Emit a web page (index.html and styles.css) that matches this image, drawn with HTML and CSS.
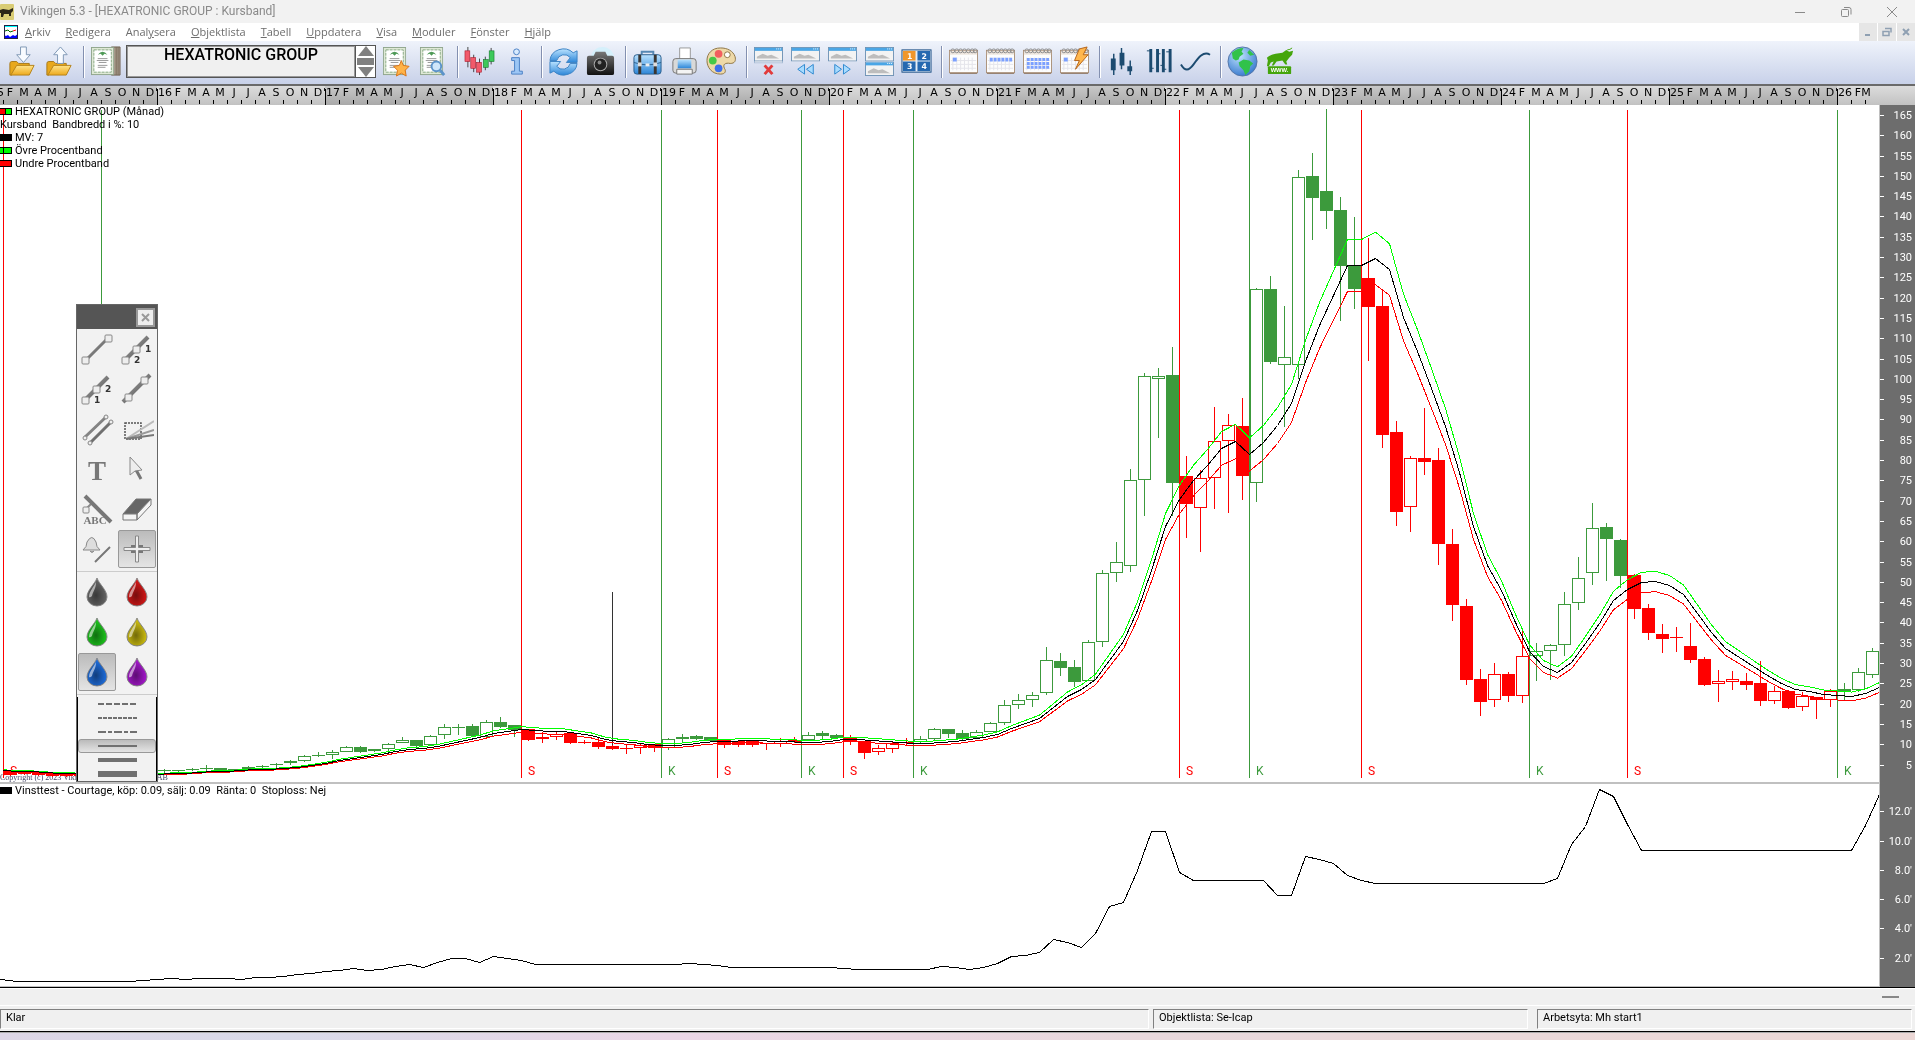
FILE: index.html
```
<!DOCTYPE html>
<html lang="sv">
<head>
  <meta charset="UTF-8">
  <meta name="viewport" content="width=device-width, initial-scale=1.0">
  <title>Vikingen 5.3 - [HEXATRONIC GROUP : Kursband]</title>
  <link rel="stylesheet" href="styles.css">
</head>
<body>
  <!-- shared gradients and symbols -->
  <svg class="defs" width="0" height="0" aria-hidden="true">
    <defs>
      <linearGradient id="gold" x1="0" y1="0" x2="0" y2="1"><stop offset="0" stop-color="#ffe48a"/><stop offset="1" stop-color="#eda91c"/></linearGradient>
      <linearGradient id="blue" x1="0" y1="0" x2="0" y2="1"><stop offset="0" stop-color="#b9e2ff"/><stop offset="1" stop-color="#2c86d8"/></linearGradient>
      <linearGradient id="dark" x1="0" y1="0" x2="0" y2="1"><stop offset="0" stop-color="#777"/><stop offset="1" stop-color="#111"/></linearGradient>
      <linearGradient id="grey" x1="0" y1="0" x2="1" y2="1"><stop offset="0" stop-color="#aaa"/><stop offset="1" stop-color="#4a4a4a"/></linearGradient>
      <linearGradient id="yearLight" x1="0" y1="0" x2="0" y2="1"><stop offset="0" stop-color="#dcdcdc"/><stop offset="1" stop-color="#c2c2c2"/></linearGradient>
      <linearGradient id="yearDark" x1="0" y1="0" x2="0" y2="1"><stop offset="0" stop-color="#c8c8c8"/><stop offset="1" stop-color="#a9a9a9"/></linearGradient>
      <radialGradient id="shade" cx="0.45" cy="0.62" r="0.55"><stop offset="0" stop-color="#000" stop-opacity="0.45"/><stop offset="1" stop-color="#000" stop-opacity="0"/></radialGradient>
      <radialGradient id="sea" cx="0.4" cy="0.3" r="0.8"><stop offset="0" stop-color="#bfe3ff"/><stop offset="1" stop-color="#2b6fc9"/></radialGradient>
    </defs>
    <symbol id="window" viewBox="0 0 30 15">
      <rect x="0.5" y="0.5" width="29" height="14" fill="#f3f3f3" stroke="#6f93b5"/>
      <rect x="1" y="1" width="28" height="3" fill="#4aa6e6"/>
      <path d="M23 2h1M25 2h1M27 2h1" stroke="#fff"/>
      <path d="M3 12V10l6-3 5 2 4-1 8 4z" fill="#bdbdbd"/>
    </symbol>
    <symbol id="calendar" viewBox="0 0 30 28">
      <rect x="0.5" y="3.5" width="29" height="23" fill="#fdfdfd" stroke="#a98f76"/>
      <path d="M1 27.5h28" stroke="#8d7660"/>
      <rect x="1" y="4" width="28" height="4" fill="#eee6de"/>
      <path d="M4 11v13M8 11v13M12 11v13M16 11v13M20 11v13M24 11v13M2 14h26M2 18h26M2 22h26" stroke="#e4e4ea"/>
      <g fill="none" stroke="#8d8d8d"><circle cx="4" cy="4" r="2"/><circle cx="8" cy="4" r="2"/><circle cx="12" cy="4" r="2"/><circle cx="16" cy="4" r="2"/><circle cx="20" cy="4" r="2"/><circle cx="24" cy="4" r="2"/><circle cx="27" cy="4" r="2"/></g>
    </symbol>
    <symbol id="cert" viewBox="0 0 24 30">
      <rect x="0.5" y="0.5" width="23" height="28" fill="#dfe9d6" stroke="#8fa58c"/>
      <rect x="3" y="3" width="18" height="23" fill="#fff" stroke="#86a883" stroke-dasharray="3 1"/>
      <path d="M7 8q5-6 10 0l-3-1-2 2-2-2z" fill="#4f9a57"/>
      <path d="M7 12h10M6 14h12M8 16h8M7 19h10M7 21h8" stroke="#999"/>
    </symbol>
    <symbol id="folder" viewBox="0 0 28 18">
      <path d="M2 5q0-2 2-2h5l2 2h11v4H9L4 17H2z" fill="#e8a81c" stroke="#a77a1b"/>
      <path d="M9 7h18l-5 10H3z" fill="url(#gold)" stroke="#b6831b"/>
    </symbol>
    <symbol id="drop" viewBox="0 0 24 30">
      <path d="M12 1C10 7 2 13 2 20a10 9 0 0 0 20 0C22 13 14 7 12 1z" fill="currentColor" stroke="#8a8a8a" stroke-width="1"/>
      <path d="M12 1C10 7 2 13 2 20a10 9 0 0 0 20 0C22 13 14 7 12 1z" fill="url(#shade)"/>
      <path d="M11 5C9 10 4 14 4 20q1 1 3-1C8 14 11 12 11 5z" fill="#fff" opacity="0.55"/>
    </symbol>
  </svg>

  <header class="titlebar">
    <svg class="app-icon" viewBox="0 0 14 16"><rect width="14" height="16" rx="1" fill="#d9cc74"/><path d="M0 6l3-1 6 1 4-2v3l-2 2v3H9v-2H4l-1 3H1V9H0z" fill="#2b2618"/></svg>
    <span class="title">Vikingen 5.3 - [HEXATRONIC GROUP : Kursband]</span>
    <div class="window-buttons">
      <button aria-label="Minimera"><svg width="12" height="12"><path d="M1 6.5h10" stroke="#8a8a8a"/></svg></button>
      <button aria-label="Återställ"><svg width="12" height="12" fill="none" stroke="#8a8a8a"><rect x="1.500" y="3.500" width="7" height="7" rx="1"/><path d="M4 1.500h5q2 0 2 2v5"/></svg></button>
      <button aria-label="Stäng"><svg width="12" height="12"><path d="M1 1l10 10M11 1L1 11" stroke="#8a8a8a"/></svg></button>
    </div>
  </header>

  <nav class="menubar">
    <svg class="doc-icon" viewBox="0 0 14 14"><rect width="14" height="14" fill="#fff"/><path d="M0 1h14" stroke="#0ff" stroke-width="2"/><path d="M0 14v-4l2 1 2-1 2 2 3-2 2 1 3-2v5z" fill="#00f"/><path d="M1 6l3-1 2 2 3-1" stroke="#060" fill="none"/><path d="M9 6l3-1" stroke="#f00"/><rect x="0.500" y="0.500" width="13" height="13" fill="none" stroke="#224"/></svg>
    <a href="#"><u>A</u>rkiv</a>
    <a href="#"><u>R</u>edigera</a>
    <a href="#">Anal<u>y</u>sera</a>
    <a href="#"><u>O</u>bjektlista</a>
    <a href="#"><u>T</u>abell</a>
    <a href="#"><u>U</u>ppdatera</a>
    <a href="#"><u>V</u>isa</a>
    <a href="#"><u>M</u>oduler</a>
    <a href="#"><u>F</u>önster</a>
    <a href="#"><u>H</u>jälp</a>
    <div class="mdi-buttons">
      <button aria-label="Minimera fönster"><svg width="10" height="10"><path d="M2 8h5" stroke="#8fa0b2" stroke-width="2"/></svg></button>
      <button aria-label="Återställ fönster"><svg width="10" height="10" fill="none" stroke="#8fa0b2"><path d="M3 1.500h6v4M1 4.500h6v4H1z" stroke-width="1.500"/></svg></button>
      <button aria-label="Stäng fönster"><svg width="10" height="10"><path d="M2 2l6 6M8 2L2 8" stroke="#8fa0b2" stroke-width="2"/></svg></button>
    </div>
  </nav>

  <div class="toolbar">
    <button class="tool" aria-label="Öppna"><svg viewBox="0 0 32 32"><use href="#folder" x="2" y="13" width="28" height="18"/><path d="M15 1h6v8h4l-7 8-7-8h4z" fill="#f8fbff" stroke="#7f98b5"/></svg></button>
    <button class="tool" aria-label="Spara"><svg viewBox="0 0 32 32"><use href="#folder" x="2" y="13" width="28" height="18"/><path d="M15 18h6v-9h4l-7-8-7 8h4z" fill="#f8fbff" stroke="#7f98b5"/></svg></button>
    <span class="sep"></span>
    <button class="tool" aria-label="Objekt"><svg viewBox="0 0 32 32"><path d="M22 1h9v29h-9z" fill="#a89b8c" stroke="#6e604f"/><path d="M27 1v29M29 1v29" stroke="#7b6d5c"/><use href="#cert" x="1" y="1" width="24" height="30"/></svg></button>
    <div class="object-picker">
      <input type="text" value="HEXATRONIC GROUP" aria-label="Objekt" readonly>
      <div class="spinner">
        <button aria-label="Föregående"><svg width="16" height="10"><path d="M8 0l8 10H0z" fill="#808080"/></svg></button>
        <button class="mid" aria-label="Välj"></button>
        <button aria-label="Nästa"><svg width="16" height="10"><path d="M8 10L0 0h16z" fill="#808080"/></svg></button>
      </div>
    </div>
    <button class="tool" aria-label="Favoriter"><svg viewBox="0 0 32 32"><use href="#cert" x="3" y="1" width="24" height="30"/><path d="M22 15l2 5 6 1-4 4 1 6-5-3-5 3 1-6-4-4 6-1z" fill="#ffb347" stroke="#d9741a"/></svg></button>
    <button class="tool" aria-label="Sök objekt"><svg viewBox="0 0 32 32"><use href="#cert" x="3" y="1" width="24" height="30"/><circle cx="20" cy="21" r="5" fill="#cfe6fa" stroke="#5b93c9" stroke-width="2"/><path d="M24 25l4 5" stroke="#5b93c9" stroke-width="3"/></svg></button>
    <span class="sep"></span>
    <button class="tool" aria-label="Diagram"><svg viewBox="0 0 32 32"><path d="M4 1v21M10 9v18M16 13v17M22 11v14M28 2v17" stroke="#444"/><g stroke-width="0.600"><g fill="#f2596a" stroke="#a51728"><rect x="1" y="5" width="5" height="11"/><rect x="7" y="12" width="5" height="11"/><rect x="13" y="17" width="5" height="10"/></g><g fill="#3cc95a" stroke="#14732a"><rect x="20" y="14" width="5" height="8"/><rect x="26" y="5" width="5" height="11"/></g></g></svg></button>
    <button class="tool" aria-label="Information"><svg viewBox="0 0 32 32"><circle cx="16" cy="6" r="3" fill="#d8ebff" stroke="#4a80c4"/><path d="M11 12h8v14h3v3H11v-3h3V15h-3z" fill="#9cc6f5" stroke="#4a80c4"/></svg></button>
    <span class="sep"></span>
    <button class="tool" aria-label="Uppdatera"><svg viewBox="0 0 32 32"><path d="M2 15a14 13 0 0 1 24-8l4-2v12H19l4-5a8 8 0 0 0-14 3z" fill="url(#blue)" stroke="#3d83c4"/><path d="M30 18a14 13 0 0 1-24 8l-4 2V16h11l-4 5a8 8 0 0 0 14-3z" fill="url(#blue)" stroke="#3d83c4"/></svg></button>
    <button class="tool" aria-label="Ögonblicksbild"><svg viewBox="0 0 32 32"><circle cx="18" cy="13" r="12" fill="#d5f0fb"/><path d="M2 12q0-2 2-2h5l2-4h10l2 4h5q2 0 2 2v16q0 2-2 2H4q-2 0-2-2z" fill="url(#dark)"/><circle cx="16" cy="19" r="7" fill="#aaa"/><circle cx="16" cy="19" r="6" fill="#222"/><circle cx="15" cy="17" r="2" fill="#8a8a8a"/></svg></button>
    <span class="sep"></span>
    <button class="tool" aria-label="Portfölj"><svg viewBox="0 0 32 32"><path d="M10 9V6h12v3" fill="none" stroke="#5688b4" stroke-width="2"/><rect x="2" y="9" width="28" height="20" rx="3" fill="url(#blue)" stroke="#2c5f8c"/><path d="M2 17q14 5 28 0" stroke="#2c5f8c" fill="none"/><path d="M8 9v20M24 9v20" stroke="#3a3632" stroke-width="3"/><rect x="6" y="17" width="4" height="4" fill="#ddd"/><rect x="22" y="17" width="4" height="4" fill="#ddd"/><rect x="14" y="18" width="4" height="3" fill="#eee"/></svg></button>
    <button class="tool" aria-label="Skriv ut"><svg viewBox="0 0 32 32"><path d="M11 2h11v13H11z" fill="#fff" stroke="#999"/><rect x="4" y="13" width="24" height="15" rx="3" fill="#d9d9d9" stroke="#777"/><path d="M9 14h14v9H9z" fill="url(#blue)"/><path d="M8 24h16v5H8z" fill="#f4f4f4" stroke="#777"/></svg></button>
    <button class="tool" aria-label="Färger"><svg viewBox="0 0 32 32"><path d="M15 2C6 2 1 8 1 15s5 14 14 14c5 0 6-3 4-6-2-4 1-6 6-5 5 0 6-3 5-7C28 5 22 2 15 2z" fill="#eed9a8" stroke="#8c7443"/><circle cx="13" cy="8" r="4" fill="#f35f5f"/><circle cx="7" cy="15" r="4" fill="#46c846"/><circle cx="13" cy="23" r="4" fill="#3f6ee8"/><circle cx="22" cy="9" r="3" fill="#fff" stroke="#8c7443"/></svg></button>
    <span class="sep"></span>
    <button class="tool" aria-label="Stäng fönster"><svg viewBox="0 0 32 32"><use href="#window" x="1" y="3" width="30" height="15" opacity="0.500"/><use href="#window" x="1" y="1" width="30" height="15"/><path d="M12 20l8 9M20 20l-8 9" stroke="#e23b3b" stroke-width="3"/></svg></button>
    <button class="tool" aria-label="Föregående fönster"><svg viewBox="0 0 32 32"><use href="#window" x="1" y="1" width="30" height="15"/><path d="M15 19v10l-7-5zM24 19v10l-7-5z" fill="#a8dcff" stroke="#2d88d0"/></svg></button>
    <button class="tool" aria-label="Nästa fönster"><svg viewBox="0 0 32 32"><use href="#window" x="1" y="1" width="30" height="15"/><path d="M8 19v10l7-5zM17 19v10l7-5z" fill="#a8dcff" stroke="#2d88d0"/></svg></button>
    <button class="tool" aria-label="Dela fönster"><svg viewBox="0 0 32 32"><use href="#window" x="1" y="1" width="30" height="15"/><use href="#window" x="1" y="16" width="30" height="15"/></svg></button>
    <button class="tool" aria-label="Fyra fönster"><svg viewBox="0 0 32 32"><rect x="1" y="4" width="30" height="23" fill="#e6eef6" stroke="#1b4e85"/><rect x="2" y="5" width="13" height="10" fill="#f0962b"/><rect x="17" y="5" width="13" height="10" fill="#2669b0"/><rect x="2" y="16" width="13" height="10" fill="#2669b0"/><rect x="17" y="16" width="13" height="10" fill="#2669b0"/><g class="icon-digits"><text x="9" y="13">1</text><text x="24" y="13">2</text><text x="9" y="24">3</text><text x="24" y="24">4</text></g></svg></button>
    <span class="sep"></span>
    <button class="tool" aria-label="Dag"><svg viewBox="0 0 32 32"><use href="#calendar" x="1" y="1" width="30" height="28"/><path d="M5 12h4v4H5z" fill="#7ba0ff"/></svg></button>
    <button class="tool" aria-label="Vecka"><svg viewBox="0 0 32 32"><use href="#calendar" x="1" y="1" width="30" height="28"/><path d="M5 14h23" stroke="#7ba0ff" stroke-width="4" stroke-dasharray="3 1"/></svg></button>
    <button class="tool" aria-label="Månad"><svg viewBox="0 0 32 32"><use href="#calendar" x="1" y="1" width="30" height="28"/><path d="M5 14h23M5 18h23M5 22h23" stroke="#7ba0ff" stroke-width="3" stroke-dasharray="3 1"/></svg></button>
    <button class="tool" aria-label="Intradag"><svg viewBox="0 0 32 32"><use href="#calendar" x="1" y="1" width="30" height="28"/><path d="M5 12h4v4H5z" fill="#7ba0ff"/><path d="M21 3l8-2-4 8h5L17 24l4-9h-5z" fill="#ffb74d" stroke="#b4631a"/></svg></button>
    <span class="sep"></span>
    <button class="tool" aria-label="Candlestick"><svg viewBox="0 0 32 32"><path d="M8 8v22M16 2v22M25 15v15" stroke="#1c4b70" stroke-width="1.500"/><path d="M5 13h5v12H5zM14 7h5v13h-5zM22 21h5v5h-5z" fill="#1c4b70"/></svg></button>
    <button class="tool" aria-label="Staplar"><svg viewBox="0 0 32 32"><path d="M8 3v24M15 3v24M21 3v24M28 3v24" stroke="#1c4b70" stroke-width="3"/><path d="M4 5h4M8 23h3M18 20h3M15 8h3M24 6h4M21 24h3" stroke="#1c4b70" stroke-width="1"/></svg></button>
    <button class="tool" aria-label="Linje"><svg viewBox="0 0 32 32"><path d="M1 19c4 7 8 7 13 0S24 5 31 9" fill="none" stroke="#1c4b70" stroke-width="2"/></svg></button>
    <span class="sep"></span>
    <button class="tool" aria-label="Internet"><svg viewBox="0 0 32 32"><circle cx="16" cy="16" r="15" fill="url(#sea)" stroke="#5576a8"/><path d="M5 7q5-5 12-5l-2 4 2 2-4 3-1 3-3 1-3-2zM12 17l5-3 6 1 4 3-3 3-1 5-4 4-2-5-4-4z" fill="#31c24a"/><path d="M23 4l5 5-4 1-3-3z" fill="#31c24a"/></svg></button>
    <button class="tool" aria-label="Vikingen www"><svg viewBox="0 0 32 32"><path d="M3 12q3-3 9-4l7-1 4-3 3 2 4-1-1 4-3 3-3 4 1 3h-2l-3-4-6 1-3 4H8l2-4-3 1-2 4H3l1-6z" fill="#45a50c"/><path d="M24 4q3 0 5-2" stroke="#45a50c" fill="none"/><rect x="4" y="21" width="24" height="8" rx="1" fill="#45a50c"/><text class="www" x="16" y="27">WWW.</text></svg></button>
  </div>

  <main class="workspace">
    <svg id="ruler" class="ruler" viewBox="0 86 1915 19" preserveAspectRatio="xMinYMin slice"></svg>

    <section class="pane price">
      <ul class="legend">
        <li><i class="swatch duo"></i>HEXATRONIC GROUP (Månad)</li>
        <li>Kursband&nbsp; Bandbredd i %: 10</li>
        <li><i class="swatch black"></i>MV: 7</li>
        <li><i class="swatch lime"></i>Övre Procentband</li>
        <li><i class="swatch red"></i>Undre Procentband</li>
      </ul>
      <svg id="price" class="plot" viewBox="0 105 1879 677" preserveAspectRatio="none"></svg>
      <svg id="priceAxis" class="axis" viewBox="1880 105 35 679" preserveAspectRatio="none"></svg>
    </section>

    <section class="pane result">
      <ul class="legend">
        <li><i class="swatch black"></i>Vinsttest - Courtage, köp: 0.09, sälj: 0.09&nbsp; Ränta: 0&nbsp; Stoploss: Nej</li>
      </ul>
      <svg id="result" class="plot" viewBox="0 784 1879 202" preserveAspectRatio="none"></svg>
      <svg id="resultAxis" class="axis" viewBox="1880 784 35 203" preserveAspectRatio="none"></svg>
    </section>

    <aside class="palette">
      <div class="palette-head"><button aria-label="Stäng verktyg"><svg width="11" height="11"><path d="M2 2l7 7M9 2L2 9" stroke="#999" stroke-width="2"/></svg></button></div>
      <div class="palette-tools">
        <button aria-label="Linje"><svg viewBox="0 0 34 34"><path d="M6 28L28 6" stroke="url(#grey)" stroke-width="3"/><g class="knob"><rect x="2" y="25" width="7" height="7" rx="1"/><rect x="25" y="3" width="7" height="7" rx="1"/></g></svg></button>
        <button aria-label="Linje 1-2"><svg viewBox="0 0 34 34"><path d="M4 29L28 5" stroke="url(#grey)" stroke-width="4"/><g class="knob"><rect x="2" y="25" width="7" height="7" rx="1"/><rect x="13" y="14" width="7" height="7" rx="1"/></g><text x="25" y="20">1</text><text x="14" y="31">2</text></svg></button>
        <button aria-label="Linje 2-1"><svg viewBox="0 0 34 34"><path d="M4 29L28 5" stroke="url(#grey)" stroke-width="4"/><g class="knob"><rect x="2" y="25" width="7" height="7" rx="1"/><rect x="13" y="14" width="7" height="7" rx="1"/></g><text x="25" y="20">2</text><text x="14" y="31">1</text></svg></button>
        <button aria-label="Förlängd linje"><svg viewBox="0 0 34 34"><path d="M3 30L30 3" stroke="url(#grey)" stroke-width="4"/><g class="knob"><rect x="5" y="22" width="7" height="7" rx="1"/><rect x="21" y="5" width="7" height="7" rx="1"/></g></svg></button>
        <button aria-label="Kanal"><svg viewBox="0 0 34 34"><path d="M5 25L26 5M11 30L31 10" stroke="url(#grey)" stroke-width="3"/><g class="knob"><circle cx="5" cy="26" r="2"/><circle cx="26" cy="5" r="2"/><circle cx="10" cy="31" r="2"/><circle cx="31" cy="10" r="2"/></g></svg></button>
        <button aria-label="Solfjäder"><svg viewBox="0 0 34 34"><rect x="5" y="11" width="16" height="16" fill="none" stroke="#555" stroke-width="1.500" stroke-dasharray="2 1"/><path d="M6 27L34 9" stroke="#bbb" stroke-width="2"/><path d="M6 27l28-9" stroke="#999" stroke-width="2"/><path d="M6 27l28-4" stroke="#777" stroke-width="2"/></svg></button>
        <button aria-label="Text"><svg viewBox="0 0 34 34"><text class="big" x="17" y="28">T</text></svg></button>
        <button aria-label="Pekare"><svg viewBox="0 0 34 34"><path d="M15 16l6 11" stroke="#777" stroke-width="3"/><path d="M10 5v18l5-4 7-1z" fill="#eee" stroke="#888"/></svg></button>
        <button aria-label="Textlinje"><svg viewBox="0 0 34 34"><path d="M5 18l7-7" stroke="#888" stroke-width="2"/><text class="abc" x="15" y="32">ABC</text><path d="M5 4l26 26" stroke="#777" stroke-width="4"/><rect class="knob" x="3" y="15" width="6" height="6" rx="1"/></svg></button>
        <button aria-label="Radera"><svg viewBox="0 0 34 34"><path d="M3 22L16 7h15L17 22z" fill="#666" stroke="#777"/><path d="M3 22h14v6H3zM17 22L31 7v6L17 28z" fill="#f4f4f4" stroke="#777"/></svg></button>
        <button aria-label="Larm"><svg viewBox="0 0 34 34"><path d="M3 18q4-3 4-8 5-9 9 0 0 5 4 8z" fill="#ddd" stroke="#888"/><path d="M10 19q2 3 4 0" fill="#aaa" stroke="#888"/><path d="M15 30l15-15" stroke="#777" stroke-width="2"/></svg></button>
        <button class="active" aria-label="Hårkors"><svg viewBox="0 0 34 34"><path d="M11 13h4v-3h4v3h4v8h-4v3h-4v-3h-4z" fill="#777"/><path d="M15.500 4h3v11.500H30v3H18.500V30h-3V18.500H4v-3h11.500z" fill="#eee" stroke="#888"/></svg></button>
      </div>
      <div class="palette-drops">
        <button class="drop-black" aria-label="Svart"><svg><use href="#drop"/></svg></button>
        <button class="drop-red" aria-label="Röd"><svg><use href="#drop"/></svg></button>
        <button class="drop-green" aria-label="Grön"><svg><use href="#drop"/></svg></button>
        <button class="drop-yellow" aria-label="Gul"><svg><use href="#drop"/></svg></button>
        <button class="drop-blue active" aria-label="Blå"><svg><use href="#drop"/></svg></button>
        <button class="drop-purple" aria-label="Lila"><svg><use href="#drop"/></svg></button>
      </div>
      <div class="palette-lines">
        <button aria-label="Streckad"><svg><path d="M0 5h39" stroke-width="2" stroke-dasharray="6 2"/></svg></button>
        <button aria-label="Prickad"><svg><path d="M0 5h39" stroke-width="2" stroke-dasharray="4 1"/></svg></button>
        <button aria-label="Streck och punkt"><svg><path d="M0 5h39" stroke-width="2" stroke-dasharray="8 2 4 2"/></svg></button>
        <button class="active" aria-label="Tunn"><svg><path d="M0 5h39" stroke-width="2"/></svg></button>
        <button aria-label="Mellan"><svg><path d="M0 5h39" stroke-width="4"/></svg></button>
        <button aria-label="Tjock"><svg><path d="M0 5h39" stroke-width="6"/></svg></button>
      </div>
    </aside>
  </main>

  <div class="tabstrip"><span></span></div>
  <footer class="statusbar">
    <div>Klar</div>
    <div>Objektlista: Se-Icap</div>
    <div>Arbetsyta: Mh start1</div>
  </footer>
  <div class="desktop"></div>

  <script src="chart.js"></script>
</body>
</html>
```
FILE: styles.css
```
* {
  box-sizing: border-box;
}

body {
  margin: 0;
  height: 100vh;
  display: flex;
  flex-direction: column;
  overflow: hidden;
  font-family: "Open Sans", "Noto Sans", sans-serif;
  font-size: 11px;
  background: #f0f0f0;
}

button {
  display: flex;
  align-items: center;
  justify-content: center;
  padding: 0;
  border: 0;
  background: none;
}

.defs {
  position: absolute;
}

/* title bar */
.titlebar {
  display: flex;
  align-items: center;
  height: 23px;
  background: #f2f2f2;
  color: #8a8a8a;
}

.app-icon {
  width: 14px;
  height: 16px;
  margin-right: 6px;
}

.title {
  flex: 1;
  font: 12px/23px Roboto, sans-serif;
}

.window-buttons {
  display: flex;
  height: 20px;
}

.window-buttons button {
  width: 46px;
}

/* menu */
.menubar {
  display: flex;
  align-items: center;
  gap: 15px;
  height: 18px;
  padding-left: 4px;
  background: #fff;
}

.doc-icon {
  width: 14px;
  height: 14px;
  margin-right: -8px;
}

.menubar a {
  color: #6d6d6d;
  font-size: 11px;
  line-height: 18px;
  text-decoration: none;
}

.mdi-buttons {
  display: flex;
  gap: 1px;
  margin-left: auto;
}

.mdi-buttons button {
  width: 18px;
  height: 18px;
  background: #e6e6e6;
}

/* toolbar */
.toolbar {
  display: flex;
  align-items: center;
  height: 45px;
  padding: 0 0 2px 3px;
  border-bottom: 2px solid #6a6a6a;
  background: linear-gradient(#eff3fb, #c8d1e9);
}

.tool {
  flex: none;
  width: 37px;
  height: 41px;
}

.tool svg {
  width: 31px;
  height: 31px;
}

.icon-digits {
  fill: #fff;
  font: bold 8px "DejaVu Sans", sans-serif;
  text-anchor: middle;
}

.www {
  fill: #fff;
  font: bold 6px "Liberation Sans", sans-serif;
  text-anchor: middle;
}

.sep {
  width: 2px;
  height: 32px;
  margin: 0 2px 0 6px;
  border-left: 1px solid #8390b0;
  border-right: 1px solid #fff;
}

.object-picker {
  display: flex;
  width: 250px;
  height: 33px;
  margin: 0 1px 0 2px;
  border: 1px solid #555;
  background: #f0f0f0;
}

.object-picker input {
  flex: 1;
  min-width: 0;
  padding: 0 0 14px;
  border: 1px solid #999;
  background: none;
  font: 500 16px Roboto, sans-serif;
  text-align: center;
}

.spinner {
  display: flex;
  flex-direction: column;
  justify-content: space-between;
  width: 20px;
  background: #fff;
  border-left: 1px solid #555;
}

.spinner .mid {
  height: 7px;
  margin: 0 1px;
  background: #808080;
}

/* charts */
.workspace {
  position: relative;
  display: flex;
  flex: 1;
  flex-direction: column;
  min-height: 0;
  border-bottom: 1px solid #000;
  background: #6d6d6d;
}

.ruler {
  width: 100%;
  height: 19px;
}

.ruler text {
  font: 11px "DejaVu Sans", sans-serif;
}

.pane {
  position: relative;
  display: grid;
  grid-template-columns: minmax(0, 1fr) 36px;
  min-height: 0;
  background: linear-gradient(90deg, #fff calc(100% - 36px), #6d6d6d 0);
}

.price {
  flex: 679;
}

.result {
  flex: 203;
}

/* multiplied so the series show on top of the legend */
.plot {
  grid-area: 1 / 1;
  width: 100%;
  height: 100%;
  min-height: 0;
  border-bottom: 2px solid #c0c0c0;
  background: #fff;
  mix-blend-mode: multiply;
}

.result .plot {
  border-bottom-width: 1px;
}

.axis {
  grid-area: 1 / 2;
  width: 100%;
  height: 100%;
  min-height: 0;
  border-left: 1px solid #c0c0c0;
}

.axis text {
  fill: #fff;
  font: 11px Roboto, sans-serif;
  text-anchor: end;
}

.signal {
  font: 12px Roboto, sans-serif;
}

.copyright {
  fill: #446;
  font: 8px "Liberation Serif", serif;
}

.legend {
  position: absolute;
  left: 0;
  top: 0;
  margin: 0;
  padding: 0;
  list-style: none;
  font: 11px/13px Roboto, sans-serif;
}

.legend li {
  display: flex;
  align-items: center;
}

.swatch {
  width: 12px;
  height: 7px;
  margin-right: 3px;
  border: 1px solid #000;
  border-left: 0;
}

.swatch.duo {
  background: linear-gradient(90deg, #f00 5px, #000 5px 6px, #0f0 6px);
}

.swatch.black {
  background: #000;
}

.swatch.lime {
  background: #0f0;
}

.swatch.red {
  background: #f00;
}

/* floating drawing tools */
.palette {
  position: absolute;
  left: 76px;
  bottom: 205px;
  width: 82px;
  border: 1px solid #666;
  background: #f2f2f2;
}

.palette-head {
  display: flex;
  align-items: center;
  justify-content: flex-end;
  height: 24px;
  padding-right: 2px;
  background: #555;
}

.palette-head button {
  width: 19px;
  height: 19px;
  border: 2px solid #999;
  background: #eee;
}

.palette-tools,
.palette-drops {
  display: grid;
  grid-template-columns: 38px 38px;
  gap: 2px;
  padding: 1px 1px 3px;
  border-bottom: 1px solid #ccc;
}

.palette-tools button,
.palette-drops button {
  height: 38px;
  border: 1px solid transparent;
  border-radius: 2px;
}

.palette .active {
  border: 1px solid #999;
  background: linear-gradient(#bbb, #e4e4e4);
}

.palette-tools svg {
  width: 34px;
  height: 34px;
}

.palette-tools text {
  fill: #333;
  font: bold 9px "DejaVu Sans", sans-serif;
}

.palette-tools .big {
  fill: #777;
  font: bold 27px "Liberation Serif", serif;
  text-anchor: middle;
}

.palette-tools .abc {
  fill: #777;
  font: bold 11px "Liberation Serif", serif;
  text-anchor: middle;
}

.knob {
  fill: #eee;
  stroke: #888;
}

.palette-drops svg {
  width: 24px;
  height: 30px;
}

.drop-black { color: #666; }
.drop-red { color: #d81818; }
.drop-green { color: #1dc81d; }
.drop-yellow { color: #d0c010; }
.drop-blue { color: #1f6fe0; }
.drop-purple { color: #a818d0; }

.palette-lines {
  margin-top: 2px;
  border: solid #000;
  border-width: 0 1px;
}

.palette-lines button {
  width: 100%;
  height: 14px;
  border-radius: 3px;
}

.palette-lines svg {
  width: 39px;
  height: 10px;
  stroke: #707070;
}

/* bottom bars */
.tabstrip {
  display: flex;
  align-items: center;
  justify-content: flex-end;
  height: 18px;
  padding-right: 16px;
  border-top: 1px solid #fff;
  border-bottom: 1px solid #fff;
}

.tabstrip span {
  width: 17px;
  height: 2px;
  background: #888;
}

.statusbar {
  display: grid;
  grid-template-columns: 1fr 379px 384px;
  padding: 3px 3px 2px 0;
  border-bottom: 1px solid #000;
  font: 11px/15px Roboto, sans-serif;
}

.statusbar div {
  height: 20px;
  padding-left: 5px;
  border: 1px solid;
  border-color: #808080 #fff #fff #808080;
}

.statusbar div + div {
  margin-left: 4px;
}

.statusbar div:last-child {
  margin-left: 9px;
}

.desktop {
  height: 8px;
  border-top: 1px solid #aaa;
  background: linear-gradient(90deg, #ddd6e6, #d9dae9 15%, #ead6e6 35%, #e8d8dc 60%, #ecd8d6);
}
```
FILE: chart.js
```
const GREEN = '#3c9a3c';
const RED = '#ff0000';
const STEP = 14;
const START = 3;

// candles: [colour, filled, high, top, bottom, low], one per month
const early = [
  ['r',1,770,770,775,775], ['r',1,772,773,774,774], ['r',1,773,773,775,775], ['r',1,773,774,776,776],
  ['r',1,774,774,776,776], ['r',1,774,774,776,776], ['r',1,774,774,776,776], ['g',1,772,773,774,774],
  ['g',1,772,773,774,774], ['g',1,771,772,773,773], ['g',1,771,771,772,773]
];
const candles = early.concat([
  ['g',1,769,770,771,774], ['g',1,770,770,771,771], ['g',1,768,769,770,770], ['g',1,765,768,769,770],
  ['g',1,768,768,770,770], ['g',1,769,769,770,770], ['g',1,766,767,769,770], ['g',1,765,766,767,768],
  ['g',1,763,764,765,767], ['g',1,760,761,763,764], ['g',0,755,756,760,761], ['g',1,752,755,756,756],
  ['g',0,750,752,754,758], ['g',0,746,747,751,751], ['g',1,746,747,752,752], ['g',1,749,749,751,751],
  ['g',0,743,744,748,750], ['g',0,737,740,742,742], ['g',1,740,740,746,746], ['g',0,735,736,744,744],
  ['g',0,724,727,734,738], ['g',1,724,727,728,734], ['g',1,724,726,736,736], ['g',0,720,722,736,736],
  ['g',1,717,722,727,727], ['g',1,725,725,730,736], ['r',1,729,729,740,740], ['r',1,732,737,739,742],
  ['r',0,731,734,736,739], ['r',1,733,733,743,743], ['r',1,740,742,743,743], ['r',1,737,742,747,748],
  ['r',1,741,746,749,749], ['r',1,745,748,749,753], ['r',0,744,745,747,753], ['r',1,744,744,748,751],
  ['g',0,738,739,747,749], ['g',1,734,737,739,742], ['g',1,735,736,739,739], ['g',1,737,737,741,741],
  ['r',1,740,740,745,747], ['r',1,741,741,745,746], ['r',1,741,741,745,746], ['r',1,743,743,744,749],
  ['r',0,738,741,743,746], ['r',1,737,740,742,742], ['g',0,732,735,739,739], ['g',1,731,733,736,738],
  ['g',1,734,735,738,738], ['r',1,735,737,742,744], ['r',1,741,741,753,758], ['r',0,745,748,751,754],
  ['r',0,742,743,748,752], ['r',1,738,742,743,744], ['g',0,736,739,741,742], ['g',0,728,729,738,739],
  ['g',1,729,729,734,737], ['g',1,730,733,739,739], ['g',0,730,732,737,737], ['g',0,722,723,731,731],
  ['g',0,700,705,722,724], ['g',0,694,700,704,708], ['g',0,692,695,699,706], ['g',0,647,660,692,694],
  ['g',1,653,661,668,675], ['g',1,660,667,682,686], ['g',0,640,642,680,680], ['g',0,570,573,641,646],
  ['g',0,542,562,572,581], ['g',0,469,480,565,571], ['g',0,373,376,479,515], ['g',0,368,376,378,437],
  ['g',1,347,375,483,515], ['r',1,456,476,504,537], ['r',0,470,478,507,551], ['r',0,407,441,477,508],
  ['r',0,414,425,440,512], ['r',1,398,426,476,499], ['g',0,288,289,482,501], ['g',1,276,289,362,363],
  ['g',0,306,357,364,426], ['g',0,170,177,364,378], ['g',1,153,176,198,239], ['g',1,109,191,211,228],
  ['g',1,197,210,266,320], ['g',1,217,266,289,308], ['r',1,238,278,307,360], ['r',1,290,306,435,447],
  ['r',1,421,432,512,525], ['r',0,456,458,506,531], ['r',1,408,458,462,474], ['r',1,448,460,544,564],
  ['r',1,529,544,605,620], ['r',1,599,606,680,684], ['r',1,669,679,702,715], ['r',0,663,674,699,706],
  ['r',1,672,674,696,701], ['r',0,629,656,695,702], ['g',0,643,651,655,680], ['g',0,644,645,650,679],
  ['g',0,592,604,644,655], ['g',0,557,578,602,609], ['g',0,503,528,572,584], ['g',1,523,527,539,580],
  ['g',1,539,540,576,587], ['r',1,574,575,609,618], ['r',1,604,608,633,639], ['r',1,624,634,639,652],
  ['r',1,627,637,638,651], ['r',1,623,646,660,662], ['r',1,657,659,685,685], ['r',0,670,681,683,701],
  ['r',0,671,679,681,689], ['r',1,673,681,685,689], ['r',1,661,683,701,705], ['r',0,686,691,700,703],
  ['r',1,690,691,708,708], ['r',0,692,696,706,710], ['r',1,697,697,700,718], ['r',0,689,691,699,706],
  ['g',1,683,689,691,699], ['g',0,668,672,689,691], ['g',0,648,651,674,677]
]);

// moving average, one level per month
const average = [
  770,771,771,772,773,773,774,774,774,774,774,774,773,773,772,771,771,770,769,769,768,767,765,763,
  760,758,756,754,751,749,748,746,743,740,737,733,731,729,730,731,731,733,735,739,741,742,744,745,
  745,744,742,741,741,740,740,741,741,742,742,741,739,739,740,741,742,743,743,742,741,739,737,734,
  728,723,718,707,696,689,679,660,641,610,570,526,499,480,465,448,441,454,442,425,403,361,325,295,
  265,265,258,269,317,351,388,426,472,526,565,590,622,651,666,672,662,643,623,600,589,582,581,585,
  594,613,632,648,657,666,675,683,689,691,694,695,696,693,687
];

const signals = [
  [3,'S'], [101,'K'], [521,'S'], [661,'K'], [717,'S'], [801,'K'], [843,'S'], [913,'K'],
  [1179,'S'], [1249,'K'], [1361,'S'], [1529,'K'], [1627,'S'], [1837,'K']
];

const profit = [
  [0,979],[17,981],[129,981],[143,980],[157,979],[171,978],[185,979],[199,978],[227,978],[241,979],
  [255,977],[269,977],[283,976],[297,974],[311,973],[325,971],[339,970],[353,968],[367,970],[381,969],
  [395,966],[409,964],[423,967],[437,962],[451,958],[465,958],[479,962],[493,956],[507,958],[521,960],
  [535,964],[675,964],[689,963],[703,964],[717,965],[731,967],[829,967],[843,968],[857,969],[927,969],
  [941,966],[955,967],[969,969],[983,967],[997,963],[1011,956],[1025,955],[1039,952],[1053,939],
  [1067,942],[1081,947],[1095,933],[1109,906],[1123,902],[1137,870],[1151,831],[1165,831],[1179,872],
  [1193,880],[1263,880],[1277,895],[1291,895],[1305,856],[1319,859],[1333,863],[1347,875],[1361,880],
  [1375,883],[1543,883],[1557,878],[1571,844],[1585,826],[1599,789],[1613,796],[1627,824],[1641,850],
  [1851,850],[1865,825],[1879,794]
];

function line(x1, y1, x2, y2, color) {
  return `<path d="M${x1} ${y1}L${x2} ${y2}" stroke="${color}" shape-rendering="crispEdges"/>`;
}

function curve(points, color) {
  const d = points.map(p => `${p[0] + 0.5},${p[1] + 0.5}`).join(' ');
  return `<polyline points="${d}" fill="none" stroke="${color}" shape-rendering="crispEdges"/>`;
}

function drawRuler() {
  const months = 'JFMAMJJASOND';
  let out = '';
  for (let year = 15; year <= 26; year++) {
    const x = 157 + (year - 16) * 12 * STEP;
    out += `<rect x="${x}" y="86" width="${year === 26 ? 400 : 168}" height="19" fill="url(#${year % 2 ? 'yearDark' : 'yearLight'})"/>`;
  }
  for (let year = 15; year <= 26; year++) {
    const x = 157 + (year - 16) * 12 * STEP;
    out += line(x + 0.5, 89, x + 0.5, 105, '#000');
    out += `<text x="${x - 2}" y="96">'${year}</text>`;
    for (let m = 1; m < (year === 26 ? 3 : 12); m++) {
      const left = x + m * STEP;
      const center = year === 26 && m === 2 ? left + 1 : left + 7;
      out += line(left + 0.5, 100, left + 0.5, 104, '#000');
      out += `<text x="${center}" y="96" text-anchor="middle">${months[m]}</text>`;
    }
  }
  document.getElementById('ruler').innerHTML = out;
}

function drawPrice() {
  let out = '<text class="copyright" x="0" y="780">Copyright (c) 2023 Vikingen Financial Software AB</text>';
  candles.forEach(([c, filled, high, top, bottom, low], i) => {
    const x = START + i * STEP;
    const color = c === 'g' ? GREEN : RED;
    out += line(x + 7.5, high, x + 7.5, low + 1, color);
    if (filled) {
      out += `<rect x="${x + 1}" y="${top}" width="13" height="${bottom - top}" fill="${color}"/>`;
    } else {
      out += `<rect x="${x + 1.5}" y="${top + 0.5}" width="12" height="${bottom - top}" fill="#fff" stroke="${color}" shape-rendering="crispEdges"/>`;
    }
  });
  out += line(612.5, 592, 612.5, 745, '#333');
  signals.forEach(([x, kind]) => {
    const color = kind === 'K' ? GREEN : RED;
    out += line(x + 0.5, 110, x + 0.5, 778, color);
    out += `<text class="signal" x="${x + 7}" y="775" fill="${color}">${kind}</text>`;
  });
  // band is five percent on each side of the average
  const zero = 785;
  const band = k => average.map((y, i) => [START + i * STEP, zero - (zero - y) * k]);
  out += curve(band(0.95), RED) + curve(band(1.05), '#00ff00') + curve(band(1), '#000');
  document.getElementById('price').innerHTML = out;
}

function drawAxis(id, from, to, step, zero, scale, format) {
  let out = '';
  for (let v = from; v <= to; v += step) {
    const y = Math.round(zero - v * scale);
    out += line(1880, y + 0.5, 1884, y + 0.5, '#fff');
    out += `<text x="1912" y="${y + 4}">${format(v)}</text>`;
  }
  document.getElementById(id).innerHTML = out;
}

drawRuler();
drawPrice();
document.getElementById('result').innerHTML = curve(profit, '#000');
drawAxis('priceAxis', 5, 165, 5, 784.8, 4.06, v => v);
drawAxis('resultAxis', 2, 12, 2, 986.8, 14.62, v => v.toFixed(1) + "'");
```
